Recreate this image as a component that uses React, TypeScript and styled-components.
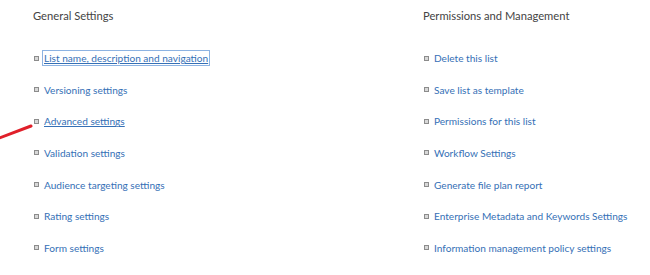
import React, { FC } from "react"
import styled, { createGlobalStyle } from "styled-components"

const GlobalStyle = createGlobalStyle`
  html, body {
    margin: 0;
    padding: 0;
    background: #fff;
  }
  body {
    font-family: Lato, "Open Sans", sans-serif;
  }
`

type Section = {
  title: string
  links: string[]
}

const sections: Section[] = [
  {
    title: "General Settings",
    links: [
      "List name, description and navigation",
      "Versioning settings",
      "Advanced settings",
      "Validation settings",
      "Audience targeting settings",
      "Rating settings",
      "Form settings",
    ],
  },
  {
    title: "Permissions and Management",
    links: [
      "Delete this list",
      "Save list as template",
      "Permissions for this list",
      "Workflow Settings",
      "Generate file plan report",
      "Enterprise Metadata and Keywords Settings",
      "Information management policy settings",
    ],
  },
]

const App: FC = () => {
  return (
    <>
      <GlobalStyle />
      <Page>
        <Arrow width="40" height="24" viewBox="0 0 40 24">
          <line x1="-2" y1="18.5" x2="31" y2="6" stroke="#e0202a" strokeWidth="3" strokeLinecap="round" />
        </Arrow>
        {sections.map((section) => (
          <Column key={section.title}>
            <Heading>{section.title}</Heading>
            <List>
              {section.links.map((link, i) => (
                <Item key={link}>
                  <Bullet />
                  <Link
                    href="#"
                    $focused={section.title === "General Settings" && i === 0}
                    $underline={section.title === "General Settings" && i === 2}
                  >
                    {link}
                  </Link>
                </Item>
              ))}
            </List>
          </Column>
        ))}
      </Page>
    </>
  )
}

export default App

const Page = styled.div`
  position: relative;
  display: grid;
  grid-template-columns: 390px 1fr;
  padding: 8px 0 0 33px;
  width: 650px;
  height: 275px;
  box-sizing: border-box;
  overflow: hidden;
`

const Arrow = styled.svg`
  position: absolute;
  left: 0;
  top: 120px;
`

const Column = styled.div`
  display: flex;
  flex-direction: column;
`

const Heading = styled.h2`
  margin: 0;
  font-size: 11.2px;
  font-weight: 400;
  color: #444;
  line-height: 16px;
`

const List = styled.ul`
  list-style: none;
  margin: 27px 0 0;
  padding: 0;
  display: flex;
  flex-direction: column;
  gap: 17.65px;
`

const Item = styled.li`
  display: flex;
  align-items: center;
  height: 14px;
`

const Bullet = styled.span`
  width: 3px;
  height: 3px;
  border: 1px solid #8c8c8c;
  background: #d8d8d8;
  margin: 0 4px 0 1px;
  flex-shrink: 0;
`

const Link = styled.a<{ $focused?: boolean; $underline?: boolean }>`
  font-size: 10.1px;
  color: #3570b6;
  text-decoration: ${(p) => (p.$underline || p.$focused ? "underline" : "none")};
  line-height: 14px;
  padding: 0 1px;
  outline: ${(p) => (p.$focused ? "1px solid #8db3e2" : "none")};
`
